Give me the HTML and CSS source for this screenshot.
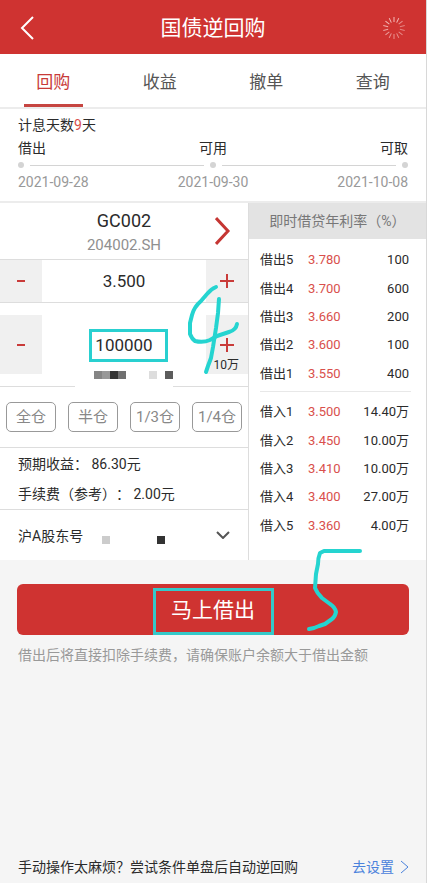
FILE: index.html
```html
<!DOCTYPE html>
<html lang="zh-CN">
<head>
<meta charset="utf-8">
<meta name="viewport" content="width=device-width, initial-scale=1">
<title>国债逆回购</title>
<link rel="stylesheet" href="styles.css">
</head>
<body>
<div class="app">
  <header class="topbar">
    <button class="back" type="button" aria-label="返回">
      <svg width="16" height="24" viewBox="0 0 16 24"><path d="M13 1 2 12 13 23"/></svg>
    </button>
    <h1>国债逆回购</h1>
    <svg class="spinner" width="24" height="24" viewBox="-12 -12 24 24">
      <path d="M0-6V-11"/>
      <path d="M0-6V-11" transform="rotate(26)"/>
      <path d="M0-6V-11" transform="rotate(51)" opacity=".7"/>
      <path d="M0-6V-11" transform="rotate(77)" opacity=".6"/>
      <path d="M0-6V-11" transform="rotate(103)" opacity=".6"/>
      <path d="M0-6V-11" transform="rotate(129)" opacity=".65"/>
      <path d="M0-6V-11" transform="rotate(154)" opacity=".7"/>
      <path d="M0-6V-11" transform="rotate(180)" opacity=".7"/>
      <path d="M0-6V-11" transform="rotate(206)" opacity=".75"/>
      <path d="M0-6V-11" transform="rotate(231)" opacity=".8"/>
      <path d="M0-6V-11" transform="rotate(257)" opacity=".85"/>
      <path d="M0-6V-11" transform="rotate(283)" opacity=".9"/>
      <path d="M0-6V-11" transform="rotate(309)"/>
      <path d="M0-6V-11" transform="rotate(334)"/>
    </svg>
  </header>

  <nav class="tabs">
    <button class="tab active" type="button">回购</button>
    <button class="tab" type="button">收益</button>
    <button class="tab" type="button">撤单</button>
    <button class="tab" type="button">查询</button>
  </nav>

  <section class="schedule">
    <p>计息天数<em>9</em>天</p>
    <div class="spread"><span>借出</span><span>可用</span><span>可取</span></div>
    <div class="track"><i class="dot"></i><i class="line"></i><i class="dot"></i><i class="line"></i><i class="dot"></i></div>
    <div class="spread dates"><span>2021-09-28</span><span>2021-09-30</span><span>2021-10-08</span></div>
  </section>

  <main class="trade">
    <div class="order">
      <div class="product">
        <strong>GC002</strong>
        <span>204002.SH</span>
        <button class="next" type="button" aria-label="选择品种">
          <svg width="16" height="30" viewBox="0 0 16 30"><path d="M1 2 13 15 1 28"/></svg>
        </button>
      </div>
      <div class="stepper">
        <button type="button" aria-label="降低利率"><svg width="14" height="14" viewBox="0 0 14 14"><path d="M3 7h8"/></svg></button>
        <input type="text" value="3.500" aria-label="利率">
        <button type="button" aria-label="提高利率"><svg width="14" height="14" viewBox="0 0 14 14"><path d="M0 7h14M7 0v14"/></svg></button>
      </div>
      <div class="stepper amount">
        <button type="button" aria-label="减少金额"><svg width="14" height="14" viewBox="0 0 14 14"><path d="M3 7h8"/></svg></button>
        <input type="text" value="100000" aria-label="金额">
        <button type="button" aria-label="增加金额"><svg width="14" height="14" viewBox="0 0 14 14"><path d="M0 7h14M7 0v14"/></svg><small>10万</small></button>
        <div class="frame"></div>
        <svg class="mosaic" width="98" height="18" viewBox="0 0 98 18">
          <path fill="#fff" d="M0 0h98v18H0z"/>
          <path fill="#858585" d="M19 2h8v8h-8z"/><path fill="#989898" d="M27 2h8v8h-8z"/><path fill="#343434" d="M35 2h8v8h-8z"/><path fill="#707070" d="M43 2h8v8h-8z"/>
          <path fill="#ddd" d="M74 2h8v8h-8z"/><path fill="#5c5c5c" d="M90 2h8v8h-8z"/>
        </svg>
        <svg class="four" width="54" height="94" viewBox="186 282 54 94">
          <path d="M216 287Q211 289 207 294L201 301Q194 307 192 315L190 323 190 334Q192 339 195 341 203 343 210 340L217 336 229 332Q236 330 237 324"/>
          <path d="M219 299 218 313 216 328 213 347 211 358 208 366 206 372"/>
        </svg>
      </div>
      <div class="shares">
        <button type="button">全仓</button><button type="button">半仓</button><button type="button">1/3仓</button><button type="button">1/4仓</button>
      </div>
      <div class="estimate">
        <p>预期收益： 86.30元</p>
        <p>手续费（参考）： 2.00元</p>
      </div>
      <div class="account">
        <label for="holder">沪A股东号</label>
        <select id="holder"><option></option></select>
        <svg class="digits" width="64" height="8" viewBox="0 0 64 8"><path fill="#ccc" d="M0 0h8v8H0z"/><path fill="#333" d="M55 0h8v8h-8z"/></svg>
        <svg class="chevron" width="14" height="8" viewBox="0 0 14 8"><path d="M1 1 7 7 13 1"/></svg>
      </div>
    </div>

    <div class="quotes">
      <h2>即时借贷年利率（%）</h2>
      <table>
        <tr><th>借出5</th><td>3.780</td><td>100</td></tr>
        <tr><th>借出4</th><td>3.700</td><td>600</td></tr>
        <tr><th>借出3</th><td>3.660</td><td>200</td></tr>
        <tr><th>借出2</th><td>3.600</td><td>100</td></tr>
        <tr><th>借出1</th><td>3.550</td><td>400</td></tr>
      </table>
      <hr>
      <table>
        <tr><th>借入1</th><td>3.500</td><td>14.40万</td></tr>
        <tr><th>借入2</th><td>3.450</td><td>10.00万</td></tr>
        <tr><th>借入3</th><td>3.410</td><td>10.00万</td></tr>
        <tr><th>借入4</th><td>3.400</td><td>27.00万</td></tr>
        <tr><th>借入5</th><td>3.360</td><td>4.00万</td></tr>
      </table>
    </div>
  </main>

  <section class="action">
    <button class="submit" type="button"><span>马上借出</span></button>
    <p>借出后将直接扣除手续费，请确保账户余额大于借出金额</p>
    <svg class="five" width="56" height="86" viewBox="306 546 56 86">
      <path d="M360 551H324L320 553Q318 558 318 564L316 574 315 588Q317 593 322 598L330 604Q335 607 336 612 335 617 332 619L325 624 319 626 314 628 309 629"/>
    </svg>
  </section>

  <footer class="hint">
    <span>手动操作太麻烦？尝试条件单盘后自动逆回购</span>
    <a href="#">去设置<svg width="9" height="14" viewBox="0 0 9 14"><path d="M1 1 8 7 1 13"/></svg></a>
  </footer>
</div>
</body>
</html>
```
FILE: styles.css
```css
* { box-sizing: border-box; }

body {
  margin: 0;
  background: #f5f5f5;
  color: #2b2b2b;
  font: 14px/20px Roboto, "Noto Sans CJK SC", sans-serif;
  text-spacing-trim: space-all;
}

h1, h2, p { margin: 0; font-weight: 400; }

button, input, select {
  margin: 0;
  padding: 0;
  border: 0;
  border-radius: 0;
  background: none;
  color: inherit;
  font: inherit;
}

svg { display: block; fill: none; }

.app {
  display: flex;
  flex-direction: column;
  min-height: 100vh;
  border-right: 1px solid #d8d8d8;
}

.topbar {
  display: grid;
  grid-template-columns: 64px 1fr 64px;
  align-items: center;
  height: 54px;
  padding-top: 2px;
  background: #cf3331;
  color: #fff;
}
.topbar h1 { font-size: 21px; line-height: 28px; text-align: center; }
.back { padding-left: 20px; }
.back svg { stroke: #fff; stroke-width: 2; }
.spinner { justify-self: center; stroke: #f3bcb9; stroke-width: 1; }

.tabs {
  display: flex;
  height: 55px;
  background: #fff;
  border-bottom: 2px solid #ececec;
}
.tab {
  display: flex;
  flex: 1;
  flex-direction: column;
  align-items: center;
  justify-content: space-between;
  padding-top: 16px;
  color: #555;
  font-size: 17px;
  line-height: 24px;
}
.tab::after { content: ""; width: 59px; height: 3px; }
.tab.active { color: #c83a38; }
.tab.active::after { background: #c64541; }

.schedule {
  padding: 6px 18px 9px;
  background: #fff;
  border-bottom: 2px solid #ececec;
}
.schedule em { color: #d9504c; font-style: normal; }
.spread { display: flex; justify-content: space-between; margin-top: 3px; }
.dates { margin-top: 4px; color: #999; }
.track { display: flex; align-items: center; gap: 6px; margin-top: 4px; }
.dot { width: 6px; height: 6px; border-radius: 50%; background: #d4d4d4; }
.line { flex: 1; height: 1px; background: #d4d4d4; }

.trade { display: grid; grid-template-columns: 249fr 177fr; background: #fff; }
.order { border-right: 1px solid #ddd; }

.product {
  position: relative;
  display: flex;
  flex-direction: column;
  align-items: center;
  gap: 2px;
  height: 57px;
  padding-top: 6px;
  border-bottom: 1px solid #ddd;
}
.product strong { font-size: 18px; line-height: 24px; font-weight: 400; }
.product span { color: #909090; font-size: 15px; line-height: 20px; }
.next { position: absolute; top: 13px; right: 17px; }
.next svg { stroke: #c53633; stroke-width: 3; }

.stepper {
  position: relative;
  display: grid;
  grid-template-columns: 42px 1fr 42px;
  height: 43px;
  border-bottom: 1px solid #ddd;
}
.stepper button {
  display: flex;
  align-items: center;
  justify-content: center;
  background: #f0f0f0;
}
.stepper button svg { stroke: #c93b39; stroke-width: 2; }
.stepper input { width: 100%; min-width: 0; font-size: 17px; text-align: center; }
.amount { height: 84px; padding: 12px 0; }
.amount button { position: relative; }
.amount small { position: absolute; right: 9px; bottom: 1px; font-size: 12px; line-height: 16px; }
.frame {
  position: absolute;
  top: 26px;
  left: calc(50% - 35px);
  width: 79px;
  height: 33px;
  border: 3px solid #29d0d0;
}
.mosaic { position: absolute; top: 66px; left: calc(50% - 49px); }
.four,
.five {
  position: absolute;
  stroke: #25d4d0;
  stroke-width: 4;
  stroke-linecap: round;
  stroke-linejoin: round;
}
.four { top: -21px; right: 8px; }

.shares {
  display: flex;
  gap: 12px;
  padding: 15px 6px;
  border-bottom: 1px solid #ddd;
}
.shares button {
  flex: 1;
  height: 30px;
  border: 1px solid #999;
  border-radius: 5px;
  color: #888;
  font-size: 15px;
  white-space: nowrap;
}

.estimate {
  display: grid;
  gap: 10px;
  padding: 6px 18px 5px;
  border-bottom: 1px solid #ddd;
}

.account {
  position: relative;
  display: grid;
  grid-template-columns: auto 1fr;
  align-items: center;
  height: 50px;
  padding: 2px 18px 0;
}
.account select { width: 100%; height: 32px; appearance: none; }
.digits { position: absolute; top: 26px; left: 102px; }
.chevron { position: absolute; top: 21px; right: 18px; stroke: #555; stroke-width: 2; pointer-events: none; }

.quotes h2 {
  height: 36px;
  background: #e3e3e3;
  color: #777;
  font-size: 14px;
  line-height: 36px;
  text-align: center;
}
.quotes table {
  width: calc(100% - 28px);
  height: 142px;
  margin: 7px 17px 0 11px;
  border-collapse: collapse;
  table-layout: fixed;
  font-size: 13px;
}
.quotes th, .quotes td { padding: 0; font-weight: 400; text-align: left; white-space: nowrap; }
.quotes th { width: 48px; }
.quotes td { color: #d9504c; }
.quotes td:last-child { color: #2b2b2b; text-align: right; }
.quotes hr { margin: 3px 15px 0 11px; border: 0; border-top: 1px solid #e8e8e8; }
.quotes hr + table { margin-top: 6px; }

.action { position: relative; padding: 24px 17px 0; }
.submit {
  display: flex;
  justify-content: center;
  width: 100%;
  height: 51px;
  padding-top: 4px;
  border-radius: 6px;
  background: #cf3331;
  color: #fff;
  font-size: 21px;
}
.submit span { width: 121px; height: 47px; border: 3px solid #35c9c9; line-height: 39px; }
.action p { margin-top: 10px; padding-left: 1px; color: #999; }
.five { top: -14px; right: 64px; }

.hint {
  display: flex;
  justify-content: space-between;
  margin-top: auto;
  padding: 0 17px 6px 18px;
}
.hint a { display: flex; align-items: center; gap: 6px; color: #4a82dc; text-decoration: none; }
.hint svg { stroke: #4a82dc; stroke-width: 1; }
```
